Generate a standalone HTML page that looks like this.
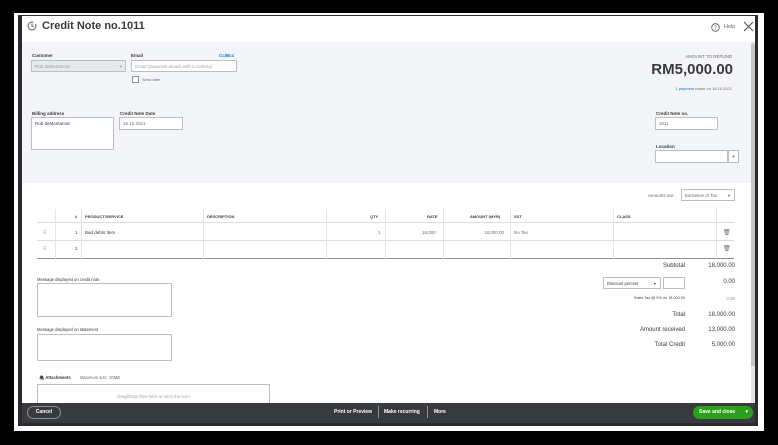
<!DOCTYPE html><html><head><style>
*{margin:0;padding:0;box-sizing:border-box}
body{width:778px;height:445px;background:#000;position:relative;overflow:hidden;font-family:"Liberation Sans",sans-serif;color:#393a3d}
.a{position:absolute}
.lb{font-size:4.5px;font-weight:bold;color:#393a3d}
.in{position:absolute;background:#fff;border:1px solid #babec5;font-size:4.5px;color:#6b6c72;padding:3px 3px}
.t{font-size:4.5px;color:#6b6c72}
</style></head><body>
<div class="a" style="left:14px;top:13px;width:750px;height:418px;background:#fff"></div>
<div class="a" style="left:18px;top:15px;width:740px;height:411px;background:#2a2b2d"></div>
<div class="a" style="left:22px;top:16px;width:733px;height:387px;background:#fff"></div>
<!-- header -->
<svg class="a" style="left:27px;top:21px" width="10" height="10" viewBox="0 0 10 10"><circle cx="5" cy="5" r="4" fill="none" stroke="#555" stroke-width="0.9" stroke-dasharray="20 3"/><path d="M5 2.5V5l1.7 1" fill="none" stroke="#555" stroke-width="0.9"/></svg>
<div class="a" style="left:42px;top:20px;font-size:11px;font-weight:bold;color:#393a3d">Credit Note no.1011</div>
<svg class="a" style="left:711px;top:23px" width="9" height="9"><circle cx="4.5" cy="4.5" r="3.8" fill="none" stroke="#555" stroke-width="0.8"/><text x="3" y="6.5" font-size="5" fill="#555" font-family="Liberation Sans">?</text></svg>
<div class="a t" style="left:724px;top:24px;font-size:5.5px">Help</div>
<svg class="a" style="left:743px;top:21px" width="11" height="11"><path d="M1 1L10 10M10 1L1 10" stroke="#555" stroke-width="1.1"/></svg>
<!-- gray panel -->
<div class="a" style="left:22px;top:42px;width:729px;height:141px;background:#f4f5f8"></div>
<div class="a" style="left:751px;top:42px;width:4px;height:361px;background:#e3e4e6"></div>
<div class="a" style="left:751px;top:44px;width:4px;height:322px;background:#c6c7c9"></div>
<div class="a lb" style="left:32px;top:53px">Customer</div>
<div class="in" style="left:31px;top:60px;width:95px;height:12px;background:#e8e9ec;color:#9a9ba0">Rob deMontarnal<span style="position:absolute;right:3px">▾</span></div>
<div class="a lb" style="left:131px;top:53px">Email</div>
<div class="a" style="left:219px;top:53px;font-size:4.5px;font-weight:bold;color:#0077c5">Cc/Bcc</div>
<div class="in" style="left:131px;top:60px;width:106px;height:12px;font-style:italic;color:#a0a1a6">Email (Separate emails with a comma)</div>
<div class="a" style="left:132px;top:76px;width:7px;height:7px;border:1px solid #8d9096;background:#fff"></div>
<div class="a t" style="left:142px;top:77px;font-size:4px">Send later</div>
<div class="a lb" style="left:32px;top:111px">Billing address</div>
<div class="in" style="left:31px;top:117px;width:83px;height:33px;color:#393a3d">Rob deMontarnal</div>
<div class="a lb" style="left:120px;top:111px">Credit Note Date</div>
<div class="in" style="left:119px;top:117px;width:64px;height:13px">16.10.2021</div>
<div class="a" style="left:640px;top:54px;width:92px;text-align:right;font-size:4.5px;color:#6b6c72">AMOUNT TO REFUND</div>
<div class="a" style="left:600px;top:61px;width:133px;text-align:right;font-size:15px;font-weight:bold;color:#393a3d">RM5,000.00</div>
<div class="a" style="left:600px;top:86px;width:132px;text-align:right;font-size:4px;color:#6b6c72"><span style="color:#0077c5">1 payment</span> made on 16.10.2021</div>
<div class="a lb" style="left:656px;top:111px">Credit Note no.</div>
<div class="in" style="left:655px;top:117px;width:63px;height:13px">1011</div>
<div class="a lb" style="left:656px;top:144px">Location</div>
<div class="in" style="left:655px;top:150px;width:73px;height:13px"></div>
<div class="in" style="left:728px;top:150px;width:11px;height:13px;text-align:center;padding:3px 0">▾</div>
<!-- amounts are -->
<div class="a t" style="left:648px;top:193px;font-size:4.5px">Amounts are</div>
<div class="in" style="left:681px;top:189px;width:54px;height:12px">Exclusive of Tax<span style="position:absolute;right:4px">▾</span></div>
<!-- table -->
<div class="a" style="left:37px;top:209px;width:697px;height:50px;border-bottom:1px solid #8d9096">
<div class="a" style="left:0;top:0;width:697px;height:14px;border-bottom:1px solid #dcdde0"></div>
<div class="a" style="left:0;top:31px;width:697px;height:1px;background:#dcdde0"></div>
</div>
<div class="a" style="left:55px;top:209px;width:1px;height:50px;background:#e3e4e6"></div>
<div class="a" style="left:81px;top:209px;width:1px;height:50px;background:#e3e4e6"></div>
<div class="a" style="left:203px;top:209px;width:1px;height:50px;background:#e3e4e6"></div>
<div class="a" style="left:326px;top:209px;width:1px;height:50px;background:#e3e4e6"></div>
<div class="a" style="left:385px;top:209px;width:1px;height:50px;background:#e3e4e6"></div>
<div class="a" style="left:443px;top:209px;width:1px;height:50px;background:#e3e4e6"></div>
<div class="a" style="left:510px;top:209px;width:1px;height:50px;background:#e3e4e6"></div>
<div class="a" style="left:613px;top:209px;width:1px;height:50px;background:#e3e4e6"></div>
<div class="a" style="left:716px;top:209px;width:1px;height:50px;background:#e3e4e6"></div>
<div class="a lb" style="left:75px;top:214px;font-size:4px">#</div>
<div class="a lb" style="left:85px;top:214px;font-size:4px">PRODUCT/SERVICE</div>
<div class="a lb" style="left:207px;top:214px;font-size:4px">DESCRIPTION</div>
<div class="a lb" style="left:370px;top:214px;font-size:4px">QTY</div>
<div class="a lb" style="left:427px;top:214px;font-size:4px">RATE</div>
<div class="a lb" style="left:470px;top:214px;font-size:4px">AMOUNT (MYR)</div>
<div class="a lb" style="left:514px;top:214px;font-size:4px">SST</div>
<div class="a lb" style="left:617px;top:214px;font-size:4px">CLASS</div>
<div class="a t" style="left:43px;top:230px">⠿</div><div class="a t" style="left:43px;top:246px">⠿</div>
<div class="a t" style="left:75px;top:230px;color:#393a3d">1</div>
<div class="a t" style="left:75px;top:246px;color:#393a3d">2</div>
<div class="a t" style="left:85px;top:230px;color:#393a3d">Bad debts Item</div>
<div class="a t" style="left:378px;top:230px">1</div>
<div class="a t" style="left:422px;top:230px">18,000</div>
<div class="a t" style="left:484px;top:230px">18,000.00</div>
<div class="a t" style="left:514px;top:230px">No Tax</div>
<div class="a t" style="left:723px;top:229px;font-size:6px">🗑</div>
<div class="a t" style="left:723px;top:245px;font-size:6px">🗑</div>
<!-- messages -->
<div class="a t" style="left:37px;top:277px;color:#393a3d;font-size:4.2px">Message displayed on credit note</div>
<div class="in" style="left:37px;top:283px;width:135px;height:34px"></div>
<div class="a t" style="left:37px;top:327px;color:#393a3d;font-size:4.2px">Message displayed on statement</div>
<div class="in" style="left:37px;top:334px;width:135px;height:27px"></div>
<div class="a t" style="left:39px;top:375px;color:#393a3d;font-weight:bold;font-size:4.2px">🖇 Attachments</div>
<div class="a t" style="left:80px;top:375px;font-size:4.2px">Maximum size: 20MB</div>
<div class="in" style="left:37px;top:384px;width:233px;height:20px;text-align:center;color:#a0a1a6;padding-top:9px">Drag/Drop files here or click the icon</div>
<!-- totals -->
<div class="a" style="left:560px;top:263px;width:125px;text-align:right;font-size:6px">Subtotal</div>
<div class="a" style="left:690px;top:263px;width:45px;text-align:right;font-size:6px">18,000.00</div>
<div class="in" style="left:603px;top:277px;width:58px;height:12px;color:#393a3d;font-size:4.2px">Discount percent<span style="position:absolute;right:4px">▾</span></div>
<div class="in" style="left:663px;top:277px;width:22px;height:12px"></div>
<div class="a" style="left:690px;top:279px;width:45px;text-align:right;font-size:6px">0.00</div>
<div class="a" style="left:560px;top:296px;width:125px;text-align:right;font-size:3.8px">Sales Tax @ 0% on 18,000.00</div>
<div class="a" style="left:690px;top:296px;width:45px;text-align:right;font-size:4.5px;color:#8d9096">0.00</div>
<div class="a" style="left:560px;top:312px;width:125px;text-align:right;font-size:6px">Total</div>
<div class="a" style="left:690px;top:312px;width:45px;text-align:right;font-size:6px">18,000.00</div>
<div class="a" style="left:560px;top:327px;width:125px;text-align:right;font-size:6px">Amount received</div>
<div class="a" style="left:690px;top:327px;width:45px;text-align:right;font-size:6px">13,000.00</div>
<div class="a" style="left:560px;top:342px;width:125px;text-align:right;font-size:6px">Total Credit</div>
<div class="a" style="left:690px;top:342px;width:45px;text-align:right;font-size:6px">5,000.00</div>
<!-- footer -->
<div class="a" style="left:22px;top:403px;width:733px;height:20px;background:#393a3d"></div>
<div class="a" style="left:27px;top:406px;width:34px;height:13px;border:1px solid #8d9096;border-radius:7px;color:#fff;font-size:5px;font-weight:bold;text-align:center;line-height:11px">Cancel</div>
<div class="a" style="left:334px;top:409px;color:#fff;font-size:5px;font-weight:bold">Print or Preview</div>
<div class="a" style="left:378px;top:406px;width:1px;height:12px;background:#8d9096"></div>
<div class="a" style="left:384px;top:409px;color:#fff;font-size:5px;font-weight:bold">Make recurring</div>
<div class="a" style="left:427px;top:406px;width:1px;height:12px;background:#8d9096"></div>
<div class="a" style="left:434px;top:409px;color:#fff;font-size:5px;font-weight:bold">More</div>
<div class="a" style="left:693px;top:406px;width:60px;height:13px;border-radius:7px;background:#2ca01c;color:#fff;font-size:5px;font-weight:bold;line-height:13px;padding-left:6px">Save and close<span style="position:absolute;right:5px">▾</span></div>
</body></html>
